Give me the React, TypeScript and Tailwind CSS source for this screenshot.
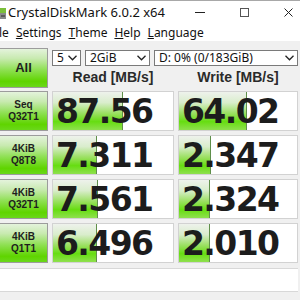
import React from "react";

const rows = [
  { l1: "Seq", l2: "Q32T1", r: "87.56", rw: 70, w: "64.02", ww: 68 },
  { l1: "4KiB", l2: "Q8T8", r: "7.311", rw: 44, w: "2.347", ww: 32 },
  { l1: "4KiB", l2: "Q32T1", r: "7.561", rw: 45, w: "2.324", ww: 31 },
  { l1: "4KiB", l2: "Q1T1", r: "6.496", rw: 44, w: "2.010", ww: 31 },
];

const labelBg =
  "bg-[linear-gradient(to_bottom,#e4f3dc_0%,#c8eab0_25%,#8ee052_55%,#5fd400_85%,#6ad81a_100%)]";
const barBg =
  "bg-[linear-gradient(to_bottom,#eef2ec_0%,#d9edcc_28%,#9be062_56%,#66dd11_78%,#8fe04e_100%)]";

function Chevron() {
  return (
    <svg width="9" height="6" viewBox="0 0 9 6" className="shrink-0">
      <path d="M0.5 0.8 L4.5 4.8 L8.5 0.8" fill="none" stroke="#222" strokeWidth="1.3" />
    </svg>
  );
}

function Select({ text, w }: { text: string; w: string }) {
  return (
    <div
      className={`${w} h-[16px] bg-white border border-[#7a7a7a] flex items-center justify-between pl-[4px] pr-[3px] text-[12px] leading-none text-[#111]`}
    >
      <span>{text}</span>
      <Chevron />
    </div>
  );
}

function Label({ a, b }: { a: string; b: string }) {
  return (
    <div
      className={`w-[48px] h-[40px] ${labelBg} border border-[#9c9c9c] border-l-0 flex flex-col items-center justify-center text-[10px] leading-[12px] font-bold text-[#1e1e1e]`}
      style={{ fontFamily: '"Liberation Sans", Arial, sans-serif' }}
    >
      <span>{a}</span>
      <span>{b}</span>
    </div>
  );
}

function Cell({ value, bar, w }: { value: string; bar: number; w: string }) {
  return (
    <div className={`${w} h-[40px] bg-white border border-[#d2d2d2] relative overflow-hidden flex items-center`}>
      <div
        className={`absolute left-0 top-0 bottom-0 ${barBg} border-r border-[#5f8f4a]`}
        style={{ width: bar }}
      />
      <span
        className="relative pl-[3px] text-[33px] leading-none font-bold text-[#1c1c1c] tracking-[-1.6px]"
        style={{ fontFamily: '"DejaVu Sans", Verdana, sans-serif' }}
      >
        {value}
      </span>
    </div>
  );
}

export default function App() {
  return (
    <div
      className="w-[300px] h-[300px] overflow-hidden bg-[#f0f0f0] text-[#111]"
      style={{ fontFamily: '"Noto Sans", "Open Sans", sans-serif' }}
    >
      {/* title bar */}
      <div className="h-[24px] bg-white border-t border-[#a8a8a8] flex items-center">
        <svg width="7" height="16" viewBox="0 0 7 16" className="shrink-0">
          <rect x="0" y="3" width="6" height="5" fill="#7bbf3a" />
          <rect x="0" y="8" width="6" height="6" fill="#8a8a8a" />
          <rect x="1" y="10" width="4" height="2" fill="#5a5a5a" />
        </svg>
        <span className="ml-[1px] text-[13px] leading-none">CrystalDiskMark 6.0.2 x64</span>
        <div className="flex-1" />
        <div className="w-[10px] h-[1px] bg-[#222] mr-[35px]" />
        <div className="w-[9px] h-[9px] border border-[#555] mr-[35px]" />
        <svg width="9" height="9" viewBox="0 0 9 9" className="mr-[7px]">
          <path d="M0.5 0.5 L8.5 8.5 M8.5 0.5 L0.5 8.5" stroke="#222" strokeWidth="1" />
        </svg>
      </div>
      {/* menu bar */}
      <div className="h-[17px] bg-white flex items-center text-[12px] leading-none gap-[7px] -ml-[1px]">
        <span>le</span>
        <span><span className="underline">S</span>ettings</span>
        <span><span className="underline">T</span>heme</span>
        <span><span className="underline">H</span>elp</span>
        <span><span className="underline">L</span>anguage</span>
      </div>
      {/* body */}
      <div className="pt-[7px]">
        <div className="flex gap-[4px]">
          <div
            className={`w-[48px] h-[40px] ${labelBg} border border-[#9c9c9c] border-l-0 flex items-center justify-center text-[13px] font-bold text-[#1e1e1e]`}
            style={{ fontFamily: '"Liberation Sans", Arial, sans-serif' }}
          >
            All
          </div>
          <div className="flex flex-col">
            <div className="flex gap-[4px] mt-[2px]">
              <Select text="5" w="w-[29px]" />
              <Select text="2GiB" w="w-[65px]" />
              <Select text="D: 0% (0/183GiB)" w="w-[144px]" />
            </div>
            <div
              className="flex gap-[4px] h-[22px] items-center text-[14px] font-bold text-[#2a2a2a]"
              style={{ fontFamily: '"Liberation Sans", Arial, sans-serif' }}
            >
              <div className="w-[122px] text-center">Read [MB/s]</div>
              <div className="w-[120px] text-center">Write [MB/s]</div>
            </div>
          </div>
        </div>
        <div className="flex flex-col gap-[4px] mt-[3px]">
          {rows.map((r, i) => (
            <div key={i} className="flex gap-[4px]">
              <Label a={r.l1} b={r.l2} />
              <Cell value={r.r} bar={r.rw} w="w-[122px]" />
              <Cell value={r.w} bar={r.ww} w="w-[120px]" />
            </div>
          ))}
        </div>
        <div className="mt-[5px] w-[298px] h-[24px] bg-white border-t border-[#d8d8d8] border-b border-[#a0a0a0]" />
      </div>
    </div>
  );
}
